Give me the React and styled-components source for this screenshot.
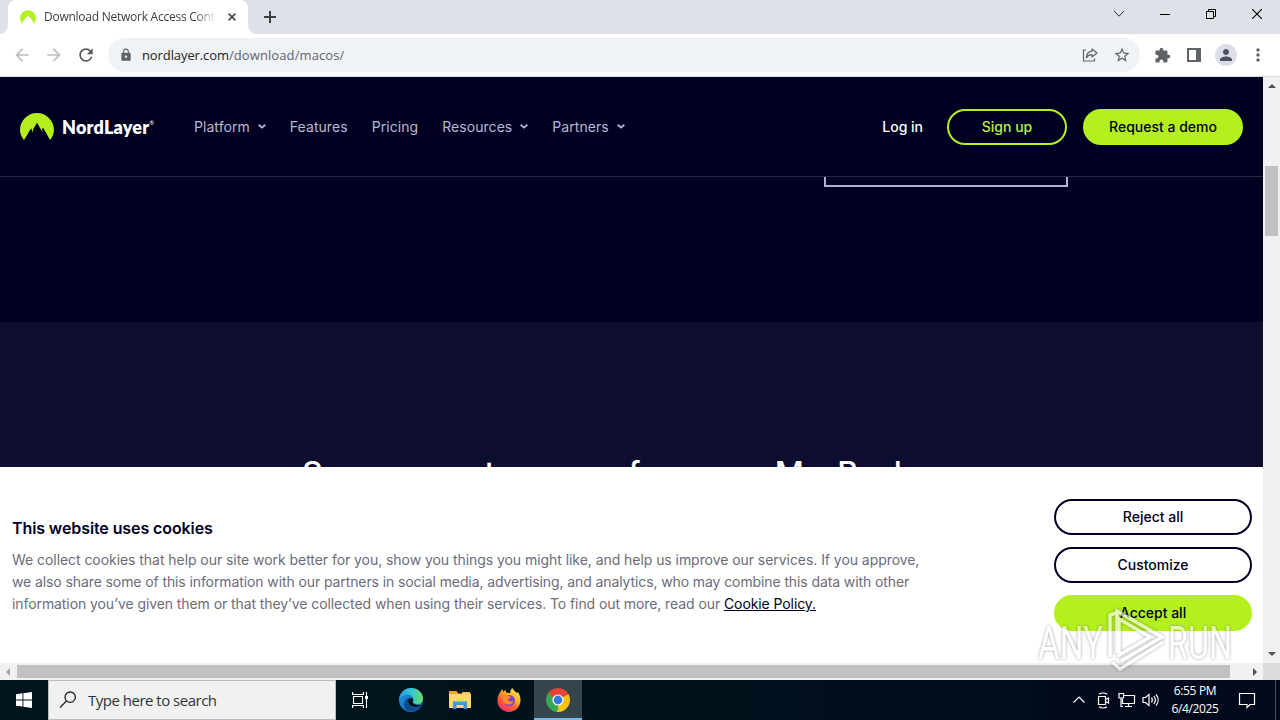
import React from 'react';
import styled, { createGlobalStyle } from 'styled-components';
import {
  MdArrowBack,
  MdArrowForward,
  MdExtension,
  MdLock,
  MdMoreVert,
  MdPerson,
  MdRefresh,
  MdStarBorder,
} from 'react-icons/md';

const GlobalStyle = createGlobalStyle`
  * {
    box-sizing: border-box;
  }

  body {
    margin: 0;
    overflow: hidden;
    font-family: Inter, sans-serif;
  }

  svg {
    display: block;
    flex-shrink: 0;
  }
`;

const Screen = styled.div`
  position: relative;
  display: flex;
  flex-direction: column;
  width: 1280px;
  height: 720px;
  overflow: hidden;
  background: #fff;
`;

/* browser */

const TabStrip = styled.div`
  display: flex;
  height: 34px;
  padding-left: 8px;
  background: #dee1e8;
`;

const Tab = styled.div`
  position: relative;
  display: flex;
  align-items: center;
  width: 240px;
  height: 34px;
  padding: 0 12px 0 12px;
  border-radius: 8px 8px 0 0;
  background: #fff;

  &::before,
  &::after {
    content: '';
    position: absolute;
    bottom: 0;
    left: -8px;
    width: 8px;
    height: 8px;
    background: radial-gradient(circle at 0 0, transparent 7.5px, #fff 8px);
  }

  &::after {
    left: 240px;
    background: radial-gradient(circle at 100% 0, transparent 7.5px, #fff 8px);
  }
`;

const TabTitle = styled.div`
  flex: 1;
  margin: 0 12px 0 8px;
  overflow: hidden;
  white-space: nowrap;
  font: 12px/16px 'Open Sans', sans-serif;
  letter-spacing: -0.25px;
  color: #3c4043;
  mask-image: linear-gradient(90deg, #000 88%, transparent 100%);
`;

const NewTab = styled.div`
  margin: 11px 0 0 16px;
`;

const WindowButtons = styled.div`
  display: flex;
  align-items: center;
  margin-left: auto;
  padding-bottom: 6px;

  & div {
    display: flex;
    justify-content: center;
    width: 46px;
  }
`;

const Toolbar = styled.div`
  display: flex;
  align-items: center;
  height: 43px;
  padding-left: 12px;
  border-bottom: 1px solid #dadce0;
  color: #5f6368;
`;

const NavButtons = styled.div`
  display: flex;
  gap: 12px;
  width: 96px;
`;

const AddressBar = styled.div`
  display: flex;
  align-items: center;
  flex-shrink: 0;
  width: 1032px;
  height: 34px;
  padding: 0 9px 0 11px;
  border-radius: 17px;
  background: #f0f3f6;
`;

const Url = styled.div`
  flex: 1;
  margin-left: 9px;
  font: 13px/20px 'Open Sans', sans-serif;
  letter-spacing: 0.1px;
  color: #5f6368;

  & span {
    letter-spacing: -0.1px;
    color: #202124;
  }
`;

const AddressIcons = styled.div`
  display: flex;
  align-items: center;
  gap: 15px;
`;

const ToolbarIcons = styled.div`
  display: flex;
  align-items: center;
  gap: 16px;
  margin-left: 14px;
`;

const Avatar = styled.div`
  display: flex;
  align-items: center;
  justify-content: center;
  width: 22px;
  height: 22px;
  margin: 0 -5px 0 -2px;
  border-radius: 50%;
  background: #dcdfe9;
  color: #4a5160;
`;

/* page */

const Viewport = styled.div`
  display: flex;
  height: 586px;
`;

const Page = styled.div`
  display: flex;
  flex-direction: column;
  width: 1263px;
  background: #000023;
`;

const Header = styled.header`
  display: flex;
  align-items: center;
  height: 100px;
  padding: 0 20px;
  border-bottom: 1px solid #26264a;
`;

const Logo = styled.div`
  display: flex;
  align-items: center;
  width: 174px;
  color: #fff;
`;

const LogoName = styled.span`
  margin-left: 8px;
  font: 800 18px/24px Lato, sans-serif;
  letter-spacing: 0.2px;
`;

const Mark = styled.span`
  align-self: flex-start;
  margin-top: 6px;
  font: 6px/8px Lato, sans-serif;
`;

const Nav = styled.nav`
  display: flex;
  gap: 24px;
`;

const NavItem = styled.a`
  display: flex;
  align-items: center;
  gap: 8px;
  font-size: 14px;
  line-height: 22px;
  letter-spacing: 0.06px;
  color: #b9b9d2;
`;

const Actions = styled.div`
  display: flex;
  align-items: center;
  gap: 16px;
  margin-left: auto;
`;

const Login = styled.a`
  margin-right: 8px;
  font-size: 14px;
  font-weight: 500;
  color: #fff;
`;

const Button = styled.button`
  width: ${({ $width }) => $width}px;
  height: 36px;
  padding: 0;
  border: 2px solid ${({ $border }) => $border};
  border-radius: 18px;
  background: ${({ $fill = 'transparent' }) => $fill};
  color: ${({ $color = '#000023' }) => $color};
  font: 500 14px/20px Inter, sans-serif;
`;

const Hero = styled.section`
  height: 145px;
  padding-left: 824px;
`;

const StoreBadge = styled.div`
  width: 244px;
  height: 10px;
  border: 2px solid #b1b0d0;
  border-top: 0;
`;

const Features = styled.section`
  height: 145px;
  padding: 130px 0 0 302px;
  overflow: hidden;
  background: #0d0d2f;
`;

const Title = styled.h2`
  margin: 0;
  white-space: nowrap;
  font-size: 32px;
  font-weight: 500;
  line-height: 44px;
  letter-spacing: -1.1px;
  color: #fff;
`;

const CookieBanner = styled.section`
  display: flex;
  justify-content: space-between;
  height: 196px;
  padding: 32px 11px 0 12px;
  background: #fff;
`;

const CookieTitle = styled.h3`
  margin: 17px 0 9px;
  font-size: 16px;
  font-weight: 600;
  line-height: 24px;
  letter-spacing: -0.1px;
  color: #000023;
`;

const CookieLine = styled.div`
  white-space: nowrap;
  font-size: 14px;
  line-height: 22px;
  letter-spacing: ${({ $spacing }) => $spacing}px;
  color: #6c6c7a;

  & a {
    color: #000023;
    text-decoration: underline;
  }
`;

const CookieButtons = styled.div`
  display: flex;
  flex-direction: column;
  gap: 12px;
`;

const VerticalScroll = styled.div`
  display: flex;
  flex-direction: column;
  align-items: center;
  width: 17px;
  padding: 7px 0 7px;
  background: #f1f1f1;
`;

const VerticalThumb = styled.div`
  width: 13px;
  height: 70px;
  margin: 78px 0 auto;
  background: #c1c1c1;
`;

const HorizontalScroll = styled.div`
  display: flex;
  align-items: center;
  height: 17px;
  padding-left: 6px;
  background: #f1f1f1;
`;

const HorizontalThumb = styled.div`
  width: 1213px;
  height: 13px;
  margin: 0 23px 0 7px;
  background: #c1c1c1;
`;

const Corner = styled.div`
  width: 17px;
  height: 17px;
  margin-left: auto;
  background: #dcdcdc;
`;

/* taskbar */

const Taskbar = styled.div`
  display: flex;
  height: 40px;
  background: linear-gradient(90deg, #00151c 0%, #00131c 50%, #020a1c 85%, #020a1c 100%);
`;

const TaskButton = styled.div`
  display: flex;
  align-items: center;
  justify-content: center;
  width: ${({ $width = 48 }) => $width}px;
  border-bottom: 2px solid ${({ $active }) => ($active ? '#76b9ed' : 'transparent')};
  border-top: 2px solid transparent;
  background: ${({ $active }) => ($active ? '#34464c' : 'transparent')};
`;

const SearchBox = styled.div`
  display: flex;
  align-items: center;
  width: 288px;
  padding-left: 10px;
  border: 1px solid #b9bdbf;
  background: #f1f1f1;
  font: 15px/20px 'Open Sans', sans-serif;
  letter-spacing: -0.5px;
  color: #333;

  & svg {
    margin-right: 11px;
  }
`;

const Tray = styled.div`
  display: flex;
  align-items: center;
  margin-left: auto;
  color: #fff;
`;

const TrayIcons = styled.div`
  display: flex;
  align-items: center;
  gap: 6px;

  & svg:first-child {
    margin-right: 3px;
  }
`;

const Clock = styled.div`
  width: 62px;
  margin: 0 12px 0 4px;
  text-align: center;
  white-space: nowrap;
  font: 12px/18px 'Open Sans', sans-serif;
  letter-spacing: -0.35px;
`;

const ShowDesktop = styled.div`
  width: 5px;
  height: 40px;
  margin-left: 19px;
  border-left: 1px solid #4a5260;
`;

const Watermark = styled.div`
  position: absolute;
  left: 1036px;
  top: 606px;
`;

const Peak = ({ size }) => (
  <svg width={ size } height={ size * 0.8 } viewBox="0 0 34 27">
    <path
      fill="#b4f01e"
      d="M4 27C1.400 23.800 0 20.600 0 17 0 7.600 7.600 0 17 0s17 7.600 17 17c0 3.600-1.400 6.800-3.900 10L23 14.500l-1 1.900.7 3.100L17 9.600l-4.100 7 .1 3.300-1.900-4.800z"
    />
  </svg>
);

const Favicon = () => (
  <svg width="16" height="15" viewBox="0 0 16 15">
    <path d="M2 13.500A8 8 0 1 1 14 13.500L10.800 8.300 8 5.800 5.200 8.300z" fill="#b4f01e" />
  </svg>
);

const Chevron = () => (
  <svg width="8" height="5" viewBox="0 0 8 5" fill="none" stroke="currentColor" strokeWidth="1.800">
    <path d="M.7.8 4 3.600 7.300.8" />
  </svg>
);

const Triangle = ({ d, color = '#505050', width = 8, height = 4 }) => (
  <svg width={ width } height={ height } viewBox={ `0 0 ${width} ${height}` }>
    <path d={ d } fill={ color } />
  </svg>
);

const ShareIcon = () => (
  <svg width="16" height="16" viewBox="0 0 16 16" fill="none" stroke="#5f6368" strokeWidth="1.200">
    <path d="M4 3H1.500v11h11v-2.500" />
    <path d="M10 2l5 4-5 4V7.700C7.500 7.600 5.800 8.500 4.300 10.800 4.700 7 6.700 4.600 10 4.200z" strokeLinejoin="round" />
  </svg>
);

const Windows = () => (
  <svg width="16" height="16" viewBox="0 0 16 16" fill="#fff">
    <path d="M0 2.200 6.500 1.300v6.200H0zM7.400 1.200 16 0v7.500H7.400zM0 8.400h6.500v6.200L0 13.700zM7.400 8.400H16V16l-8.600-1.200z" />
  </svg>
);

const SearchIcon = () => (
  <svg width="18" height="18" viewBox="0 0 18 18" fill="none" stroke="#222" strokeWidth="1.300">
    <circle cx="11.200" cy="6.200" r="5.200" />
    <path d="M7.400 10 1 16.500" />
  </svg>
);

const TaskView = () => (
  <svg width="17" height="16" viewBox="0 0 17 16" fill="none" stroke="#fff" strokeWidth="1.100">
    <path d="M.6 0v2.500h10.800V0M.6 16v-2.500h10.800V16M1.500 4.500h9v7h-9zM14.500 0v16" />
    <path d="M13 4h3v3h-3z" fill="#fff" stroke="none" />
  </svg>
);

const Edge = () => (
  <svg width="26" height="26" viewBox="0 0 26 26">
    <defs>
      <linearGradient id="edgeTop" x1="0" y1=".5" x2="1" y2=".6">
        <stop offset="0" stopColor="#279fdf" />
        <stop offset=".5" stopColor="#36c5d2" />
        <stop offset="1" stopColor="#68df65" />
      </linearGradient>
      <linearGradient id="edgeBottom" x1="0" y1="0" x2="1" y2="1">
        <stop offset="0" stopColor="#2095dd" />
        <stop offset="1" stopColor="#1065b9" />
      </linearGradient>
    </defs>
    <circle cx="13" cy="13" r="12" fill="url(#edgeBottom)" />
    <path d="M10 13.500c0 5.500 5 8.500 13 5.500-3 5-9 7-14 4.500C4 20 5 12 13 9.500c-2 .7-3 2-3 4z" fill="#124b91" />
    <path d="M1 13C2 5 7 1 13 1c7 0 12 5 12 10.500 0 5-5 7-9.500 4.500-1-.7 0-1.400 0-3C15.500 9 12 7 8 7.700 4.500 8.200 2 10.500 1 13z" fill="url(#edgeTop)" />
    <path d="M15.200 16.300c-1.500-1 .5-2-.2-4.300-1.200-2-5-1-5 2 .3 4.500 5 7.500 12.700 5 1-.3.800-1.200 0-1.200-3.200.7-5.500 0-7.500-1.500z" fill="#00151c" />
  </svg>
);

const Folder = () => (
  <svg width="24" height="20" viewBox="0 0 24 20">
    <path d="M1 1h7.500l2 2.500H23V7H1z" fill="#e9a32c" />
    <path d="M1 4h22v14H1z" fill="#fcd66f" />
    <path d="M14 2h8v2h-8z" fill="#f4c35d" />
    <path d="M5 11h14v8h-3.500v-4h-7v4H5z" fill="#3f96d2" />
    <path d="M5 11h14v1.500H5z" fill="#68b4e3" />
  </svg>
);

const Firefox = () => (
  <svg width="24" height="24" viewBox="0 0 24 24">
    <defs>
      <linearGradient id="fox" x1=".85" y1="0" x2=".2" y2="1">
        <stop offset="0" stopColor="#fff04b" />
        <stop offset=".35" stopColor="#ffb32a" />
        <stop offset=".65" stopColor="#ff5a38" />
        <stop offset="1" stopColor="#ef2675" />
      </linearGradient>
    </defs>
    <path d="M3 4.500 5.200 1l1 3L8.500 2l.8 2.800c1 0 3 .1 4 .5C13 3 14 1.200 15.500 0c.5 2.500 3 3.400 4.500 5l.8-1c1.700 2.200 2.700 5 2.700 8 0 7-5 12-11.500 12S.5 19 .5 12.500C.5 9 1.500 6.500 3 4.500z" fill="url(#fox)" />
    <circle cx="12.500" cy="12.500" r="5.500" fill="#7a42d8" />
    <path d="M5.500 7c2-1 4.500-.5 5.500 1l3 .8c0 1.500-2.500 1.700-3 2.500.2 2 3 3 5.300 1.700 0 2.500-2.500 4-5 3.500C7 16 5 13 5.500 10z" fill="#ff8a2c" />
    <path d="M15.500 6c3 1.500 4.500 4 3.800 7-.2-2-1.500-3.500-3-4.500z" fill="#ffc72e" />
  </svg>
);

const Chrome = () => (
  <svg width="24" height="24" viewBox="0 0 24 24">
    <path d="M12 12 1.610 6A12 12 0 0 1 22.390 6z" fill="#ea4335" />
    <path d="M12 12 22.390 6A12 12 0 0 1 12 24z" fill="#fbc116" />
    <path d="M12 12v12A12 12 0 0 1 1.610 6z" fill="#34a853" />
    <path d="M12 6.500h10.700l-.31-.5-10.390-2z" fill="#ea4335" />
    <path d="M16.800 14.700 12 24l-1.500-.1 5-9z" fill="#fbc116" />
    <path d="M7.300 14.700 1.610 6l1-1.500 6 8z" fill="#34a853" />
    <circle cx="12" cy="12" r="5.600" fill="#fff" />
    <circle cx="12" cy="12" r="4.400" fill="#3478e5" />
  </svg>
);

const Recorder = () => (
  <svg width="18" height="18" viewBox="0 0 18 18" fill="none" stroke="currentColor" strokeWidth="1.200">
    <path d="M4.500 5.500h7v8h-7zM11.500 8.500l3-1.500v5l-3-1.500M5 3.200C7 1.600 11 1.600 13 3.200M5 15.800c2 1.600 6 1.600 8 0" />
  </svg>
);

const Network = () => (
  <svg width="18" height="16" viewBox="0 0 18 16" fill="none" stroke="currentColor" strokeWidth="1.200">
    <path d="M6 3.500h10.500v8H4.500V7M7 14.500h7M10.500 11.500v3M1 1.500h4.500V6H1zM3 6v8.500h2" />
  </svg>
);

const Speaker = () => (
  <svg width="18" height="16" viewBox="0 0 18 16" fill="none" stroke="currentColor" strokeWidth="1.200">
    <path d="M1 5.500h2.500L7 2.500v11l-3.500-3H1zM9.500 5.700c1 1.400 1 3.200 0 4.600M11.800 4c2 2.500 2 5.500 0 8M14 2.500c2.800 3.300 2.800 7.700 0 11" />
  </svg>
);

const Glow = styled.g`
  opacity: 0.65;
  filter: drop-shadow(0 0 1.5px rgba(40, 40, 40, 0.65));
`;

const AnyRun = () => (
  <svg width="200" height="66" viewBox="0 0 200 66">
    <Glow fill="#fff" fontFamily="Roboto, sans-serif" fontSize="46">
      <text x="2" y="53" textLength="65" lengthAdjust="spacingAndGlyphs">ANY</text>
      <text x="132" y="53" textLength="64" lengthAdjust="spacingAndGlyphs">RUN</text>
      <g fill="none" stroke="#fff" strokeWidth="3.500">
        <path d="M74 51V9l9-3" />
        <path d="M81 47V5l45 26-41 24" />
        <path d="M83 13l31 18-31 18zM76 56l8 7 43-27" />
      </g>
    </Glow>
  </svg>
);

const NAV_ITEMS = [
  { label: 'Platform', menu: true },
  { label: 'Features' },
  { label: 'Pricing' },
  { label: 'Resources', menu: true },
  { label: 'Partners', menu: true },
];

const App = () => (
  <Screen>
    <GlobalStyle />
    <TabStrip>
      <Tab>
        <Favicon />
        <TabTitle>Download Network Access Control</TabTitle>
        <svg width="8" height="8" viewBox="0 0 8 8" stroke="#45494d" strokeWidth="1.600">
          <path d="M.6.6l6.800 6.800M7.400.6.6 7.400" />
        </svg>
      </Tab>
      <NewTab>
        <svg width="12" height="12" viewBox="0 0 12 12" stroke="#3c4043" strokeWidth="2">
          <path d="M6 0v12M0 6h12" />
        </svg>
      </NewTab>
      <WindowButtons>
        <div>
          <svg width="12" height="8" viewBox="0 0 12 8" fill="none" stroke="#333"><path d="M1 1l5 5.200L11 1" /></svg>
        </div>
        <div>
          <svg width="10" height="2" viewBox="0 0 10 2"><path d="M0 1h10v1H0z" /></svg>
        </div>
        <div>
          <svg width="10" height="10" viewBox="0 0 10 10" fill="none" stroke="#000">
            <path d="M.5 2.500h7v7h-7zM2.500 2.500v-2h7v7h-2" />
          </svg>
        </div>
        <div>
          <svg width="10" height="10" viewBox="0 0 10 10" stroke="#000" strokeWidth="1.100"><path d="M0 0l10 10M10 0 0 10" /></svg>
        </div>
      </WindowButtons>
    </TabStrip>
    <Toolbar>
      <NavButtons>
        <MdArrowBack size={ 20 } color="#bdbfc2" />
        <MdArrowForward size={ 20 } color="#bdbfc2" />
        <MdRefresh size={ 20 } color="#55595e" />
      </NavButtons>
      <AddressBar>
        <MdLock size={ 14 } />
        <Url>
          <span>nordlayer.com</span>
          /download/macos/
        </Url>
        <AddressIcons>
          <ShareIcon />
          <MdStarBorder size={ 18 } />
        </AddressIcons>
      </AddressBar>
      <ToolbarIcons>
        <MdExtension size={ 17 } />
        <svg width="14" height="14" viewBox="0 0 14 14" fill="none" stroke="currentColor" strokeWidth="2">
          <path d="M1 1h12v12H1z" />
          <path d="M9 1h4v12H9z" fill="currentColor" stroke="none" />
        </svg>
        <Avatar><MdPerson size={ 18 } /></Avatar>
        <MdMoreVert size={ 20 } />
      </ToolbarIcons>
    </Toolbar>

    <Viewport>
      <Page>
        <Header>
          <Logo>
            <Peak size={ 34 } />
            <LogoName>NordLayer</LogoName>
            <Mark>®</Mark>
          </Logo>
          <Nav>
            {
              NAV_ITEMS.map(({ label, menu }) => (
                <NavItem key={ label }>
                  {label}
                  {menu && <Chevron />}
                </NavItem>
              ))
            }
          </Nav>
          <Actions>
            <Login>Log in</Login>
            <Button $width={ 120 } $border="#b4f01e" $color="#b9ee4a">Sign up</Button>
            <Button $width={ 160 } $border="#b4f01e" $fill="#b4f01e">Request a demo</Button>
          </Actions>
        </Header>
        <Hero>
          <StoreBadge />
        </Hero>
        <Features>
          <Title>Secure remote access from your MacBook</Title>
        </Features>
        <CookieBanner>
          <div>
            <CookieTitle>This website uses cookies</CookieTitle>
            <CookieLine $spacing={ -0.055 }>
              We collect cookies that help our site work better for you, show you things you might like,
              and help us improve our services. If you approve,
            </CookieLine>
            <CookieLine $spacing={ -0.1 }>
              we also share some of this information with our partners in social media, advertising,
              and analytics, who may combine this data with other
            </CookieLine>
            <CookieLine $spacing={ -0.085 }>
              information you’ve given them or that they’ve collected when using their services.
              To find out more, read our
              {' '}
              <a>Cookie Policy.</a>
            </CookieLine>
          </div>
          <CookieButtons>
            <Button $width={ 198 } $border="#000023">Reject all</Button>
            <Button $width={ 198 } $border="#000023">Customize</Button>
            <Button $width={ 198 } $border="#b4f01e" $fill="#b4f01e">Accept all</Button>
          </CookieButtons>
        </CookieBanner>
      </Page>
      <VerticalScroll>
        <Triangle d="M0 4 4 0l4 4z" />
        <VerticalThumb />
        <Triangle d="M0 0h8L4 4z" />
      </VerticalScroll>
    </Viewport>
    <HorizontalScroll>
      <Triangle d="M4 0v8L0 4z" color="#a3a3a3" width={ 4 } height={ 8 } />
      <HorizontalThumb />
      <Triangle d="M0 0l4 4-4 4z" width={ 4 } height={ 8 } />
      <Corner />
    </HorizontalScroll>

    <Taskbar>
      <TaskButton><Windows /></TaskButton>
      <SearchBox>
        <SearchIcon />
        Type here to search
      </SearchBox>
      <TaskButton $width={ 49 }><TaskView /></TaskButton>
      <TaskButton $width={ 52 }><Edge /></TaskButton>
      <TaskButton $width={ 46 }><Folder /></TaskButton>
      <TaskButton $width={ 51 }><Firefox /></TaskButton>
      <TaskButton $active><Chrome /></TaskButton>
      <Tray>
        <TrayIcons>
          <svg width="12" height="8" viewBox="0 0 12 8" fill="none" stroke="currentColor" strokeWidth="1.200"><path d="M.5 6.500 6 1l5.500 5.500" /></svg>
          <Recorder />
          <Network />
          <Speaker />
        </TrayIcons>
        <Clock>
          <div>6:55 PM</div>
          <div>6/4/2025</div>
        </Clock>
        <svg width="18" height="18" viewBox="0 0 18 18" fill="none" stroke="currentColor" strokeWidth="1.200">
          <path d="M1.500 2.500h15v11H12l-3 3v-3H1.500z" />
        </svg>
        <ShowDesktop />
      </Tray>
    </Taskbar>
    <Watermark><AnyRun /></Watermark>
  </Screen>
);

export default App;
